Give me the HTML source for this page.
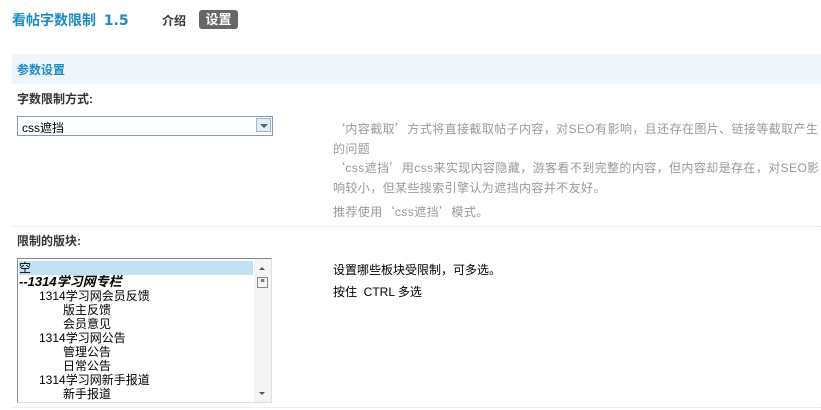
<!DOCTYPE html>
<html><head><meta charset="utf-8"><style>
body{margin:0;width:821px;height:410px;overflow:hidden;background:#fff;font-family:"Liberation Sans","Noto Sans CJK SC",sans-serif;font-size:12px;color:#000;position:relative}
.a{position:absolute;white-space:nowrap}
.g{color:#999;line-height:19.5px;letter-spacing:0.4px}
.q{font-family:"Noto Sans CJK SC",sans-serif}
.row{height:14px;line-height:14px;font-size:12px}
</style></head><body>
<div class="a" style="left:12px;top:10px;font-size:14px;font-weight:bold;color:#1b8bc0">看帖字数限制 &nbsp;<span style="font-family:'DejaVu Sans',sans-serif;font-size:14px">1.5</span></div>
<div class="a" style="left:162px;top:12px;font-weight:bold;color:#333">介绍</div>
<div class="a" style="left:199px;top:10px;width:39px;height:19px;background:#666;border-radius:3px;color:#fff;font-weight:bold;font-size:13px;line-height:19px;text-align:center">设置</div>
<div class="a" style="left:12px;top:54px;width:809px;height:30px;background:#eef5fb"></div>
<div class="a" style="left:17px;top:61px;font-weight:bold;color:#1b8bc0">参数设置</div>
<div class="a" style="left:17px;top:90px;font-weight:bold;color:#333">字数限制方式:</div>
<div class="a" style="left:17px;top:116px;width:254px;height:18px;border:1px solid #7f9db9;background:#fff">
<span style="position:absolute;left:4px;top:2px;font-size:12px">css遮挡</span>
<div style="position:absolute;right:1px;top:1px;width:15px;height:14px;border:1px solid #a5b5c9;background:#e4ecf5;box-sizing:border-box"><div style="position:absolute;left:3px;top:5px;border:4px solid transparent;border-top-color:#4d6185;border-bottom:0"></div></div>
</div>
<div class="a g" style="left:333px;top:119px"><span class="q">‘</span>内容截取<span class="q">’</span>方式将直接截取帖子内容，对SEO有影响，且还存在图片、链接等截取产生<br>的问题</div>
<div class="a g" style="left:333px;top:158px"><span class="q">‘</span>css遮挡<span class="q">’</span>用css来实现内容隐藏，游客看不到完整的内容，但内容却是存在，对SEO影<br>响较小，但某些搜索引擎认为遮挡内容并不友好。</div>
<div class="a g" style="left:333px;top:202px">推荐使用<span class="q">‘</span>css遮挡<span class="q">’</span>模式。</div>
<div class="a" style="left:12px;top:226px;width:809px;border-top:1px dotted #ddd"></div>
<div class="a" style="left:17px;top:232px;font-weight:bold;color:#333">限制的版块:</div>
<div class="a" style="left:17px;top:258px;width:253px;height:143px;border:1px solid #888;border-right-color:#ddd;border-bottom-color:#ddd;overflow:hidden;background:#fff">
<div style="position:absolute;left:1px;top:2px;width:234px">
<div class="row" style="background:#c2e2f3">空</div>
<div class="row" style="font-weight:bold;font-style:italic;font-size:13px">--1314学习网专栏</div>
<div class="row" style="padding-left:20px">1314学习网会员反馈</div>
<div class="row" style="padding-left:44px">版主反馈</div>
<div class="row" style="padding-left:44px">会员意见</div>
<div class="row" style="padding-left:20px">1314学习网公告</div>
<div class="row" style="padding-left:44px">管理公告</div>
<div class="row" style="padding-left:44px">日常公告</div>
<div class="row" style="padding-left:20px">1314学习网新手报道</div>
<div class="row" style="padding-left:44px">新手报道</div>
</div>
<div style="position:absolute;right:0;top:0;width:17px;height:143px;background:#f4f4f4">
<div style="position:absolute;left:5px;top:8px;border:3px solid transparent;border-bottom-color:#555;border-top:0"></div>
<div style="position:absolute;left:3px;top:18px;width:9px;height:9px;border:1px solid #888;font-size:7px;line-height:8px;text-align:center">≡</div>
<div style="position:absolute;left:5px;top:133px;border:3px solid transparent;border-top-color:#555;border-bottom:0"></div>
</div>
</div>
<div class="a" style="left:333px;top:261px">设置哪些板块受限制，可多选。</div>
<div class="a" style="left:333px;top:283px">按住 &nbsp;CTRL 多选</div>
<div class="a" style="left:12px;top:407px;width:809px;border-top:1px dotted #ddd"></div>
</body></html>
